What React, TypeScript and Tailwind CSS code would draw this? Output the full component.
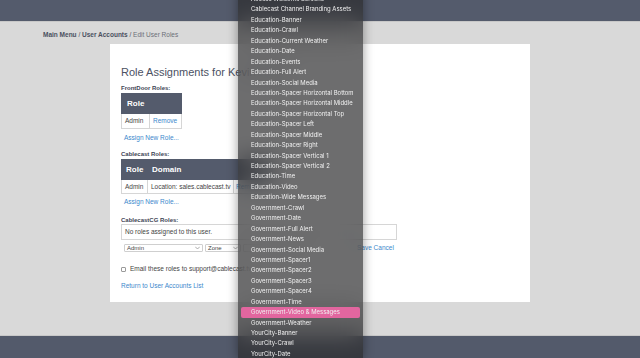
import React from 'react';

const menuItems = [
    "Access Welcome Screens",
    "Cablecast Channel Branding Assets",
    "Education-Banner",
    "Education-Crawl",
    "Education-Current Weather",
    "Education-Date",
    "Education-Events",
    "Education-Full Alert",
    "Education-Social Media",
    "Education-Spacer Horizontal Bottom",
    "Education-Spacer Horizontal Middle",
    "Education-Spacer Horizontal Top",
    "Education-Spacer Left",
    "Education-Spacer Middle",
    "Education-Spacer Right",
    "Education-Spacer Vertical 1",
    "Education-Spacer Vertical 2",
    "Education-Time",
    "Education-Video",
    "Education-Wide Messages",
    "Government-Crawl",
    "Government-Date",
    "Government-Full Alert",
    "Government-News",
    "Government-Social Media",
    "Government-Spacer1",
    "Government-Spacer2",
    "Government-Spacer3",
    "Government-Spacer4",
    "Government-Time",
    "Government-Video & Messages",
    "Government-Weather",
    "YourCity-Banner",
    "YourCity-Crawl",
    "YourCity-Date",
];

const selected = "Government-Video & Messages";

const Chevron = () => (
    <svg width="5" height="4" viewBox="0 0 10 6" fill="none" className="shrink-0">
        <path d="M1 1l4 4 4-4" stroke="#8a8a8a" strokeWidth="1.4" strokeLinecap="round" strokeLinejoin="round" />
    </svg>
);

const FakeSelect = ({ label, width }: { label: string; width: string }) => (
    <div className={`${width} h-[8px] border border-[#cfcfcf] rounded-[1px] bg-white flex items-center justify-between px-[2px] text-[6px] leading-[6px] text-[#444]`}>
        <span>{label}</span>
        <Chevron />
    </div>
);

export default function App() {
    return (
        <div className="relative w-[640px] h-[358px] overflow-hidden bg-[#d9d9d9] text-[#3e4454]" style={{ fontFamily: '"Liberation Sans", Arial, sans-serif' }}>
            {/* top bar */}
            <div className="h-[22px] bg-[#545b6c] border-b border-[#c8c8c8]" />

            {/* breadcrumb */}
            <div className="pl-[43px] mt-[9px] h-[8px] text-[6.5px] leading-[8px] text-[#4a5060]">
                <span className="font-bold">Main Menu</span> / <span className="font-bold">User Accounts</span> / <span className="text-[#6b6f78]">Edit User Roles</span>
            </div>

            {/* card */}
            <div className="ml-[110px] mt-[5px] w-[420px] bg-white px-[11px] pt-[21px] pb-[12px]">
                <h2 className="text-[11px] leading-[14px] h-[14px] text-[#4b5163] whitespace-nowrap">Role Assignments for Kevin Jones</h2>

                <div className="mt-[5px] h-[8px] text-[6px] leading-[8px] font-bold text-[#3e4454]">FrontDoor Roles:</div>
                <table className="border-collapse text-[6.5px] mt-[1px]">
                    <thead>
                        <tr className="bg-[#545b6c] text-white h-[20px]">
                            <th className="w-[28px] text-left pl-[5px] text-[8px] font-bold border border-[#545b6c]">Role</th>
                            <th className="w-[32px] border border-[#545b6c] border-l-[#6c7384]"></th>
                        </tr>
                    </thead>
                    <tbody>
                        <tr className="h-[15px]">
                            <td className="border border-[#d6d6d6] pl-[3px] text-[#444]">Admin</td>
                            <td className="border border-[#d6d6d6] pl-[3px] text-[#3d88cc]">Remove</td>
                        </tr>
                    </tbody>
                </table>
                <div className="mt-[5px] pl-[3px] h-[8px] text-[6.5px] leading-[8px] text-[#3d88cc]">Assign New Role...</div>

                <div className="mt-[8px] h-[8px] text-[6px] leading-[8px] font-bold text-[#3e4454]">Cablecast Roles:</div>
                <table className="border-collapse text-[6.5px] mt-[1px]">
                    <thead>
                        <tr className="bg-[#545b6c] text-white h-[20px]">
                            <th className="w-[26px] text-left pl-[4px] text-[8px] font-bold border border-[#545b6c]">Role</th>
                            <th className="w-[86px] text-left pl-[4px] text-[8px] font-bold border border-[#545b6c] border-l-[#6c7384]">Domain</th>
                            <th className="w-[36px] border border-[#545b6c] border-l-[#6c7384]"></th>
                        </tr>
                    </thead>
                    <tbody>
                        <tr className="h-[14px]">
                            <td className="border border-[#d6d6d6] pl-[3px] text-[#444]">Admin</td>
                            <td className="border border-[#d6d6d6] pl-[3px] text-[#444] whitespace-nowrap">Location: sales.cablecast.tv</td>
                            <td className="border border-[#d6d6d6] pl-[2px] text-[#3d88cc]">Remove</td>
                        </tr>
                    </tbody>
                </table>
                <div className="mt-[4px] pl-[3px] h-[8px] text-[6.5px] leading-[8px] text-[#3d88cc]">Assign New Role...</div>

                <div className="mt-[10px] h-[8px] text-[6px] leading-[8px] font-bold text-[#3e4454]">CablecastCG Roles:</div>
                <div className="w-[276px] h-[16px] border border-[#d6d6d6] flex items-center pl-[3px] text-[6.5px] text-[#444]">No roles assigned to this user.</div>

                <div className="mt-[4px] flex items-center pl-[3px] gap-[2px]">
                    <FakeSelect label="Admin" width="w-[79px]" />
                    <FakeSelect label="Zone" width="w-[36px]" />
                    <FakeSelect label="" width="w-[60px]" />
                    <div className="ml-[52px] text-[6.5px] leading-[8px] text-[#3d88cc]">Save Cancel</div>
                </div>

                <div className="mt-[13px] flex items-center gap-[4px] h-[8px] text-[6.5px] text-[#444]">
                    <span className="w-[5px] h-[5px] border border-[#9a9a9a] rounded-[1px] bg-white" />
                    <span>Email these roles to support@cablecast.tv</span>
                </div>

                <div className="mt-[9px] h-[8px] text-[6.5px] leading-[8px] text-[#3d88cc]">Return to User Accounts List</div>
            </div>

            {/* footer */}
            <div className="mt-[33px] h-[30px] bg-[#535a6b] border-t border-[#c8c8c8]" />

            {/* open popup menu */}
            <div className="absolute left-[238px] top-[-10px] w-[125px] pt-[4px] bg-[rgba(40,40,42,0.68)] backdrop-blur-md shadow-[0_0_10px_rgba(0,0,0,0.4)]" style={{ fontFamily: 'Inter, "Liberation Sans", sans-serif' }}>
                {menuItems.map((item) => (
                    <div key={item} className="px-[3px]">
                        <div className={`h-[10.45px] leading-[10.45px] pl-[10px] text-[5.95px] whitespace-nowrap rounded-[2px] text-[#f1f1f1] ${item === selected ? 'bg-[#e2669f]' : ''}`}>
                            {item}
                        </div>
                    </div>
                ))}
            </div>
        </div>
    );
}
